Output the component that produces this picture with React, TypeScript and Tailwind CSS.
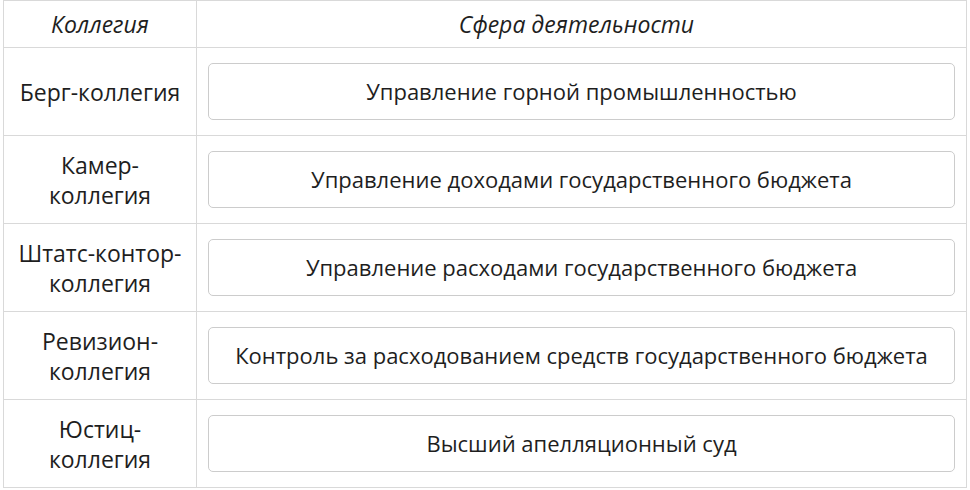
const rows = [
  { name: ['Берг-коллегия'], sphere: 'Управление горной промышленностью' },
  { name: ['Камер-', 'коллегия'], sphere: 'Управление доходами государственного бюджета' },
  { name: ['Штатс-контор-', 'коллегия'], sphere: 'Управление расходами государственного бюджета' },
  { name: ['Ревизион-', 'коллегия'], sphere: 'Контроль за расходованием средств государственного бюджета' },
  { name: ['Юстиц-', 'коллегия'], sphere: 'Высший апелляционный суд' },
];

export default function App() {
  return (
    <div className="w-[970px] h-[490px] bg-white pl-[3px] font-['Open_Sans',sans-serif] text-[#1e1e1e]">
      <div className="w-[964px] border border-[#d9d9d9]">
        {/* header */}
        <div className="flex h-[46px] text-[23px] italic">
          <div className="w-[193px] border-r border-[#d9d9d9] flex items-center justify-center">Коллегия</div>
          <div className="flex-1 flex items-center justify-center pr-[10px]">Сфера деятельности</div>
        </div>

        {rows.map((r) => (
          <div key={r.sphere} className="flex border-t border-[#d9d9d9]">
            <div className="w-[193px] border-r border-[#d9d9d9] flex flex-col items-center justify-center text-[23px] leading-[30px] text-center">
              {r.name.map((n) => (
                <span key={n}>{n}</span>
              ))}
            </div>
            <div className="flex-1 px-[11px] py-[15px]">
              <div className="h-[57px] border border-[#cccccc] rounded-[5px] flex items-center justify-center text-[22px]">
                {r.sphere}
              </div>
            </div>
          </div>
        ))}
      </div>
    </div>
  );
}
